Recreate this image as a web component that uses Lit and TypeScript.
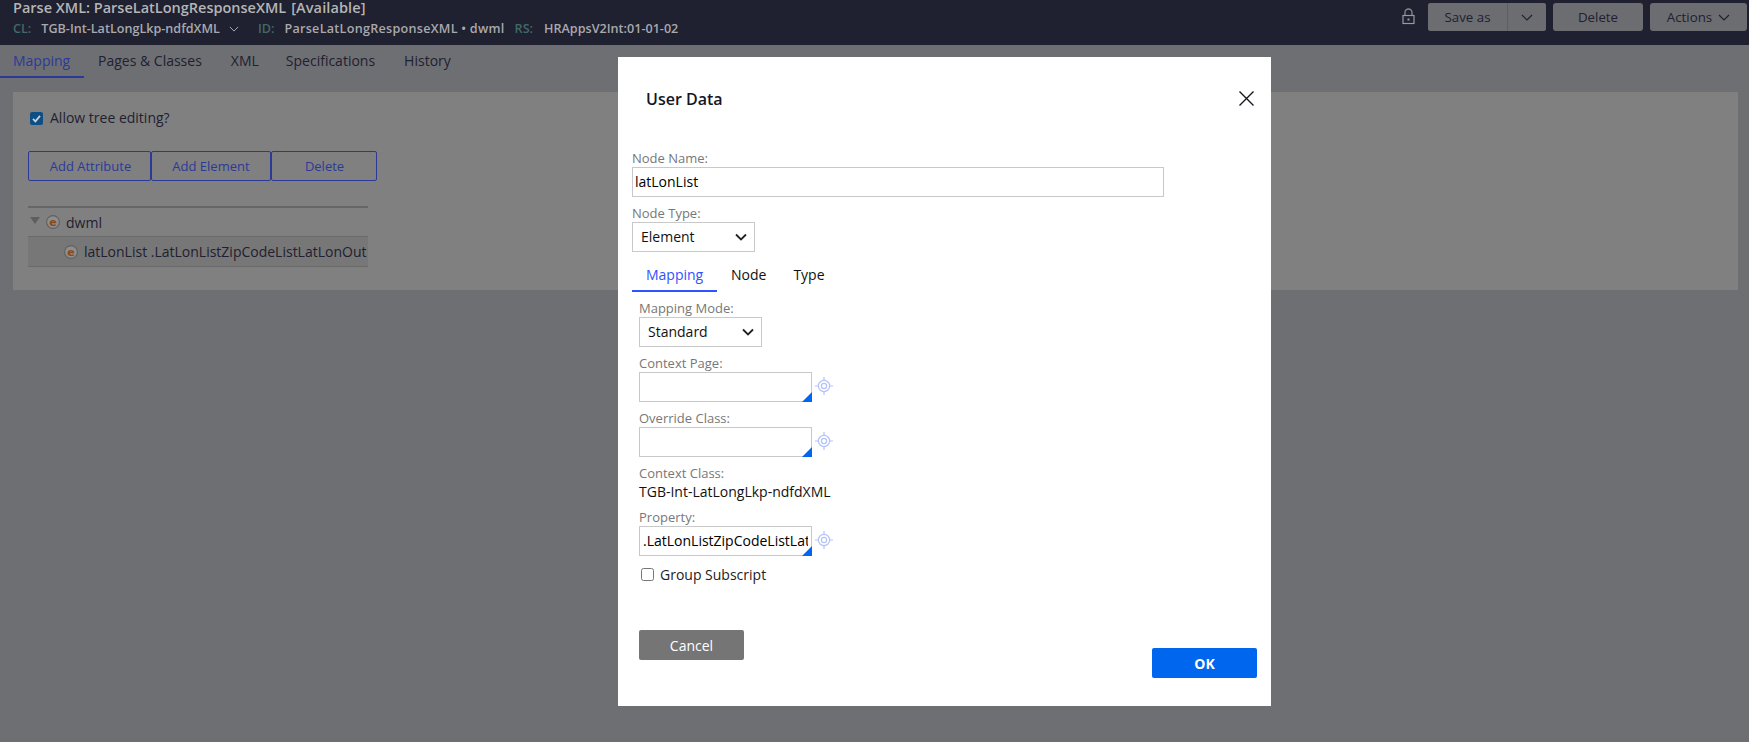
import { LitElement, html, css } from "lit";
import { customElement } from "lit/decorators.js";

const chevron = (w: number, h: number, color: string, sw = 1.2) => html`<svg width=${w} height=${h} viewBox="0 0 12 7" fill="none" stroke=${color} stroke-width=${sw}><path d="M1 1l5 5 5-5"/></svg>`;

const eIcon = html`<svg class="e" width="14" height="14" viewBox="0 0 14 14"><circle cx="7" cy="7" r="6.400" fill="#8e8e8e" stroke="#606060" stroke-width="1.100"/><text x="7" y="10.700" text-anchor="middle" font-size="11" font-weight="700" font-family="'DejaVu Sans',sans-serif" fill="#8a4a17">e</text></svg>`;

const target = html`<svg class="target" width="18" height="18" viewBox="0 0 18 18" fill="none" stroke="#b3c2fb" stroke-width="1.2"><circle cx="9" cy="9" r="5.6"/><circle cx="9" cy="9" r="2.6"/><path d="M9 0v3.4M9 14.6V18M0 9h3.4M14.6 9H18"/></svg>`;

@customElement("app-root")
export class AppRoot extends LitElement {
  static styles = css`
    :host { display: block; width: 100%; height: 742px; position: relative; overflow: hidden; background: #6e6f73; font-family: "Open Sans", "Noto Sans", sans-serif; font-size: 14px; color: #1f2030; }
    * { box-sizing: border-box; }
    .header { height: 45px; background: #1f2030; padding: 0 2px 0 13px; display: flex; justify-content: space-between; }
    .title { font-size: 14.5px; font-weight: 600; color: #b5b5b5; line-height: 16px; height: 16px; white-space: nowrap; }
    .title span { margin-left: 5px; font-weight: 600; letter-spacing: .1px; }
    .meta { display: flex; align-items: center; font-size: 12.6px; font-weight: 600; color: #a9a9ad; margin-top: 5px; line-height: 16px; white-space: nowrap; }
    .meta b { font-weight: 600; color: #3f6a67; margin-right: 10px; }
    .meta b.rs { margin-right: 11px; }
    .meta .chev { display: flex; margin: 0 19px 0 9px; }
    .meta .val { margin-right: 10px; letter-spacing: .27px; }
    .actions { display: flex; align-items: flex-start; padding-top: 3px; gap: 7px; }
    .lock { margin: 5px 6px 0 0; display: flex; }
    .hbtn { height: 28px; background: #6c6d70; border-radius: 3px; display: flex; align-items: center; justify-content: center; font-size: 13.3px; color: #1f2030; }
    .split { display: flex; background: #6c6d70; border-radius: 3px; }
    .split .hbtn:first-child { width: 80px; border-right: 1px solid #5d5e62; border-radius: 3px 0 0 3px; }
    .split .hbtn:last-child { width: 38px; border-radius: 0 3px 3px 0; }
    .del { width: 90px; }
    .act { width: 97px; gap: 6px; }
    .tabs { display: flex; height: 33px; color: #1f2030; }
    .tab { line-height: 20px; }
    .tab.main { width: 84px; padding: 6px 0 0 13px; color: #2b3a98; border-bottom: 2px solid #2b3a98; margin-right: 14px; }
    .tab.plain { padding: 6px 0 0; }
    .tabs .pc { margin-right: 29px; }
    .tabs .xm { margin-right: 27px; }
    .tabs .sp { margin-right: 29px; }
    .panel { margin: 14px 11px 0 13px; height: 198px; background: #808080; padding: 19px 15px 0; }
    .allow { display: flex; align-items: center; height: 14px; margin-left: 2px; gap: 7px; line-height: 14px; }
    .box { width: 13px; height: 13px; background: #0d4f85; border-radius: 2px; display: flex; }
    .btns { display: flex; margin-top: 26px; }
    .obtn { height: 30px; border: 1px solid #2b3a98; border-radius: 2px; color: #2b3a98; font-size: 13px; display: flex; align-items: center; justify-content: center; background: transparent; }
    .w1 { width: 123px; padding-left: 2px; }
    .w2 { width: 120px; }
    .w3 { width: 106px; padding-left: 1px; }
    .tree { width: 340px; margin-top: 25px; border-top: 2px solid #666; }
    .row { display: flex; align-items: center; height: 30px; border-bottom: 1px solid #6a6a6a; white-space: nowrap; overflow: hidden; }
    .row.sub { background: #777; padding-left: 36px; }
    .row.top { height: 29px; }
    .tri { width: 0; height: 0; border: 5px solid transparent; border-top: 7px solid #5e5e5e; border-bottom: 0; margin: 0 0 3px 2px; }
    .row.top .e { margin: 0 6px 0 6px; }
    .row.sub .e { margin-right: 6px; }
    .modal { position: absolute; left: 618px; top: 57px; width: 653px; height: 649px; background: #fff; color: #000; }
    .mhead { display: flex; justify-content: space-between; align-items: center; height: 62px; padding: 21px 16px 0 28px; font-size: 16px; font-weight: 600; color: #14161f; }
    .x { display: flex; }
    .mbody { padding: 30px 14px 0; display: flex; flex-direction: column; }
    .label { color: #777; font-size: 13px; line-height: 18px; height: 18px; white-space: nowrap; }
    input.text { display: block; border: 1px solid #c9c9c9; height: 30px; padding: 0 2px 2px; font: 14px "Open Sans", sans-serif; color: #000; outline: none; background: #fff; border-radius: 0; }
    .name { width: 532px; margin-bottom: 7px; }
    .select { width: 123px; height: 30px; border: 1px solid #c9c9c9; display: flex; align-items: center; justify-content: space-between; padding: 0 7px 2px 8px; font-size: 14px; color: #111; }
    .select svg { margin-top: 2px; }
    .mtabs { display: flex; height: 40px; }
    .mtab { padding-top: 13px; line-height: 20px; height: 40px; margin-right: 28px; color: #111; }
    .mtab.on { width: 85px; margin-right: 14px; padding-left: 14px; color: #2f53ff; border-bottom: 2px solid #2f53ff; }
    .mtab.node { margin-right: 27px; }
    .inner { padding: 7px 0 0 7px; display: flex; flex-direction: column; }
    .field { display: flex; align-items: center; gap: 3px; }
    .target { margin-top: -2px; }
    .wrap { position: relative; width: 173px; height: 30px; }
    .wrap input { width: 100%; overflow: hidden; padding: 0 3px 2px; }
    .corner { position: absolute; right: 0; bottom: 0; width: 0; height: 0; border-left: 10px solid transparent; border-bottom: 10px solid #0066ee; }
    .gap1 { margin-bottom: 7px; }
    .staticv { height: 26px; line-height: 20px; color: #111; white-space: nowrap; }
    .gs { display: flex; align-items: center; gap: 6px; margin: 10px 0 0 2px; height: 16px; color: #222; }
    .gs input { margin: 0; width: 13px; height: 13px; }
    .foot { position: absolute; left: 21px; right: 14px; top: 573px; height: 48px; }
    .cancel { position: absolute; left: 0; top: 0; width: 105px; height: 30px; background: #757575; color: #fff; border-radius: 2px; display: flex; align-items: center; justify-content: center; }
    .ok { position: absolute; right: 0; top: 18px; width: 105px; height: 30px; background: #0066ee; color: #fff; border-radius: 2px; font-weight: 700; display: flex; align-items: center; justify-content: center; }
  `;

  render() {
    return html`
      <div class="header">
        <div>
          <div class="title">Parse XML: ParseLatLongResponseXML<span>[Available]</span></div>
          <div class="meta">
            <b>CL:</b><span>TGB-Int-LatLongLkp-ndfdXML</span><span class="chev">${chevron(10, 6, "#a9a9ad")}</span>
            <b>ID:</b><span class="val">ParseLatLongResponseXML • dwml</span>
            <b class="rs">RS:</b><span>HRAppsV2Int:01-01-02</span>
          </div>
        </div>
        <div class="actions">
          <span class="lock"><svg width="13" height="17" viewBox="0 0 13 17" fill="none"><path d="M3 8V4.5a3.5 3.5 0 0 1 7 0V8" stroke="#8a8a8a" stroke-width="1.3"/><rect x="1" y="7.500" width="11" height="8" stroke="#9a9a9a" stroke-width="1.2"/><rect x="5.500" y="10.500" width="2" height="2" fill="#9a9a9a"/></svg></span>
          <div class="split"><div class="hbtn">Save as</div><div class="hbtn">${chevron(12, 7, "#1f2030")}</div></div>
          <div class="hbtn del">Delete</div>
          <div class="hbtn act">Actions ${chevron(12, 7, "#1f2030")}</div>
        </div>
      </div>
      <div class="tabs">
        <div class="tab main">Mapping</div>
        <div class="tab plain pc">Pages &amp; Classes</div>
        <div class="tab plain xm">XML</div>
        <div class="tab plain sp">Specifications</div>
        <div class="tab plain">History</div>
      </div>
      <div class="panel">
        <div class="allow"><span class="box"><svg width="13" height="13" viewBox="0 0 13 13" fill="none" stroke="#c8d2dc" stroke-width="1.8"><path d="M3 6.800l2.400 2.500L10 3.800"/></svg></span>Allow tree editing?</div>
        <div class="btns">
          <div class="obtn w1">Add Attribute</div>
          <div class="obtn w2">Add Element</div>
          <div class="obtn w3">Delete</div>
        </div>
        <div class="tree">
          <div class="row top"><span class="tri"></span>${eIcon}dwml</div>
          <div class="row sub">${eIcon}latLonList .LatLonListZipCodeListLatLonOut</div>
        </div>
      </div>
      <div class="modal">
        <div class="mhead"><span>User Data</span><span class="x"><svg width="17" height="17" viewBox="0 0 17 17" fill="none" stroke="#14161f" stroke-width="1.4"><path d="M1.500 1.500l14 14M15.500 1.500l-14 14"/></svg></span></div>
        <div class="mbody">
          <div class="label">Node Name:</div>
          <input class="text name" .value=${"latLonList"} />
          <div class="label">Node Type:</div>
          <div class="select">Element ${chevron(12, 8, "#222", 1.8)}</div>
          <div class="mtabs">
            <div class="mtab on">Mapping</div>
            <div class="mtab node">Node</div>
            <div class="mtab">Type</div>
          </div>
          <div class="inner">
            <div class="label">Mapping Mode:</div>
            <div class="select gap1">Standard ${chevron(12, 8, "#222", 1.8)}</div>
            <div class="label">Context Page:</div>
            <div class="field gap1"><div class="wrap"><input class="text" /><span class="corner"></span></div>${target}</div>
            <div class="label">Override Class:</div>
            <div class="field gap1"><div class="wrap"><input class="text" /><span class="corner"></span></div>${target}</div>
            <div class="label">Context Class:</div>
            <div class="staticv">TGB-Int-LatLongLkp-ndfdXML</div>
            <div class="label">Property:</div>
            <div class="field"><div class="wrap"><input class="text" .value=${".LatLonListZipCodeListLatLonOut"} /><span class="corner"></span></div>${target}</div>
            <label class="gs"><input type="checkbox" />Group Subscript</label>
          </div>
        </div>
        <div class="foot">
          <div class="cancel">Cancel</div>
          <div class="ok">OK</div>
        </div>
      </div>
    `;
  }
}
